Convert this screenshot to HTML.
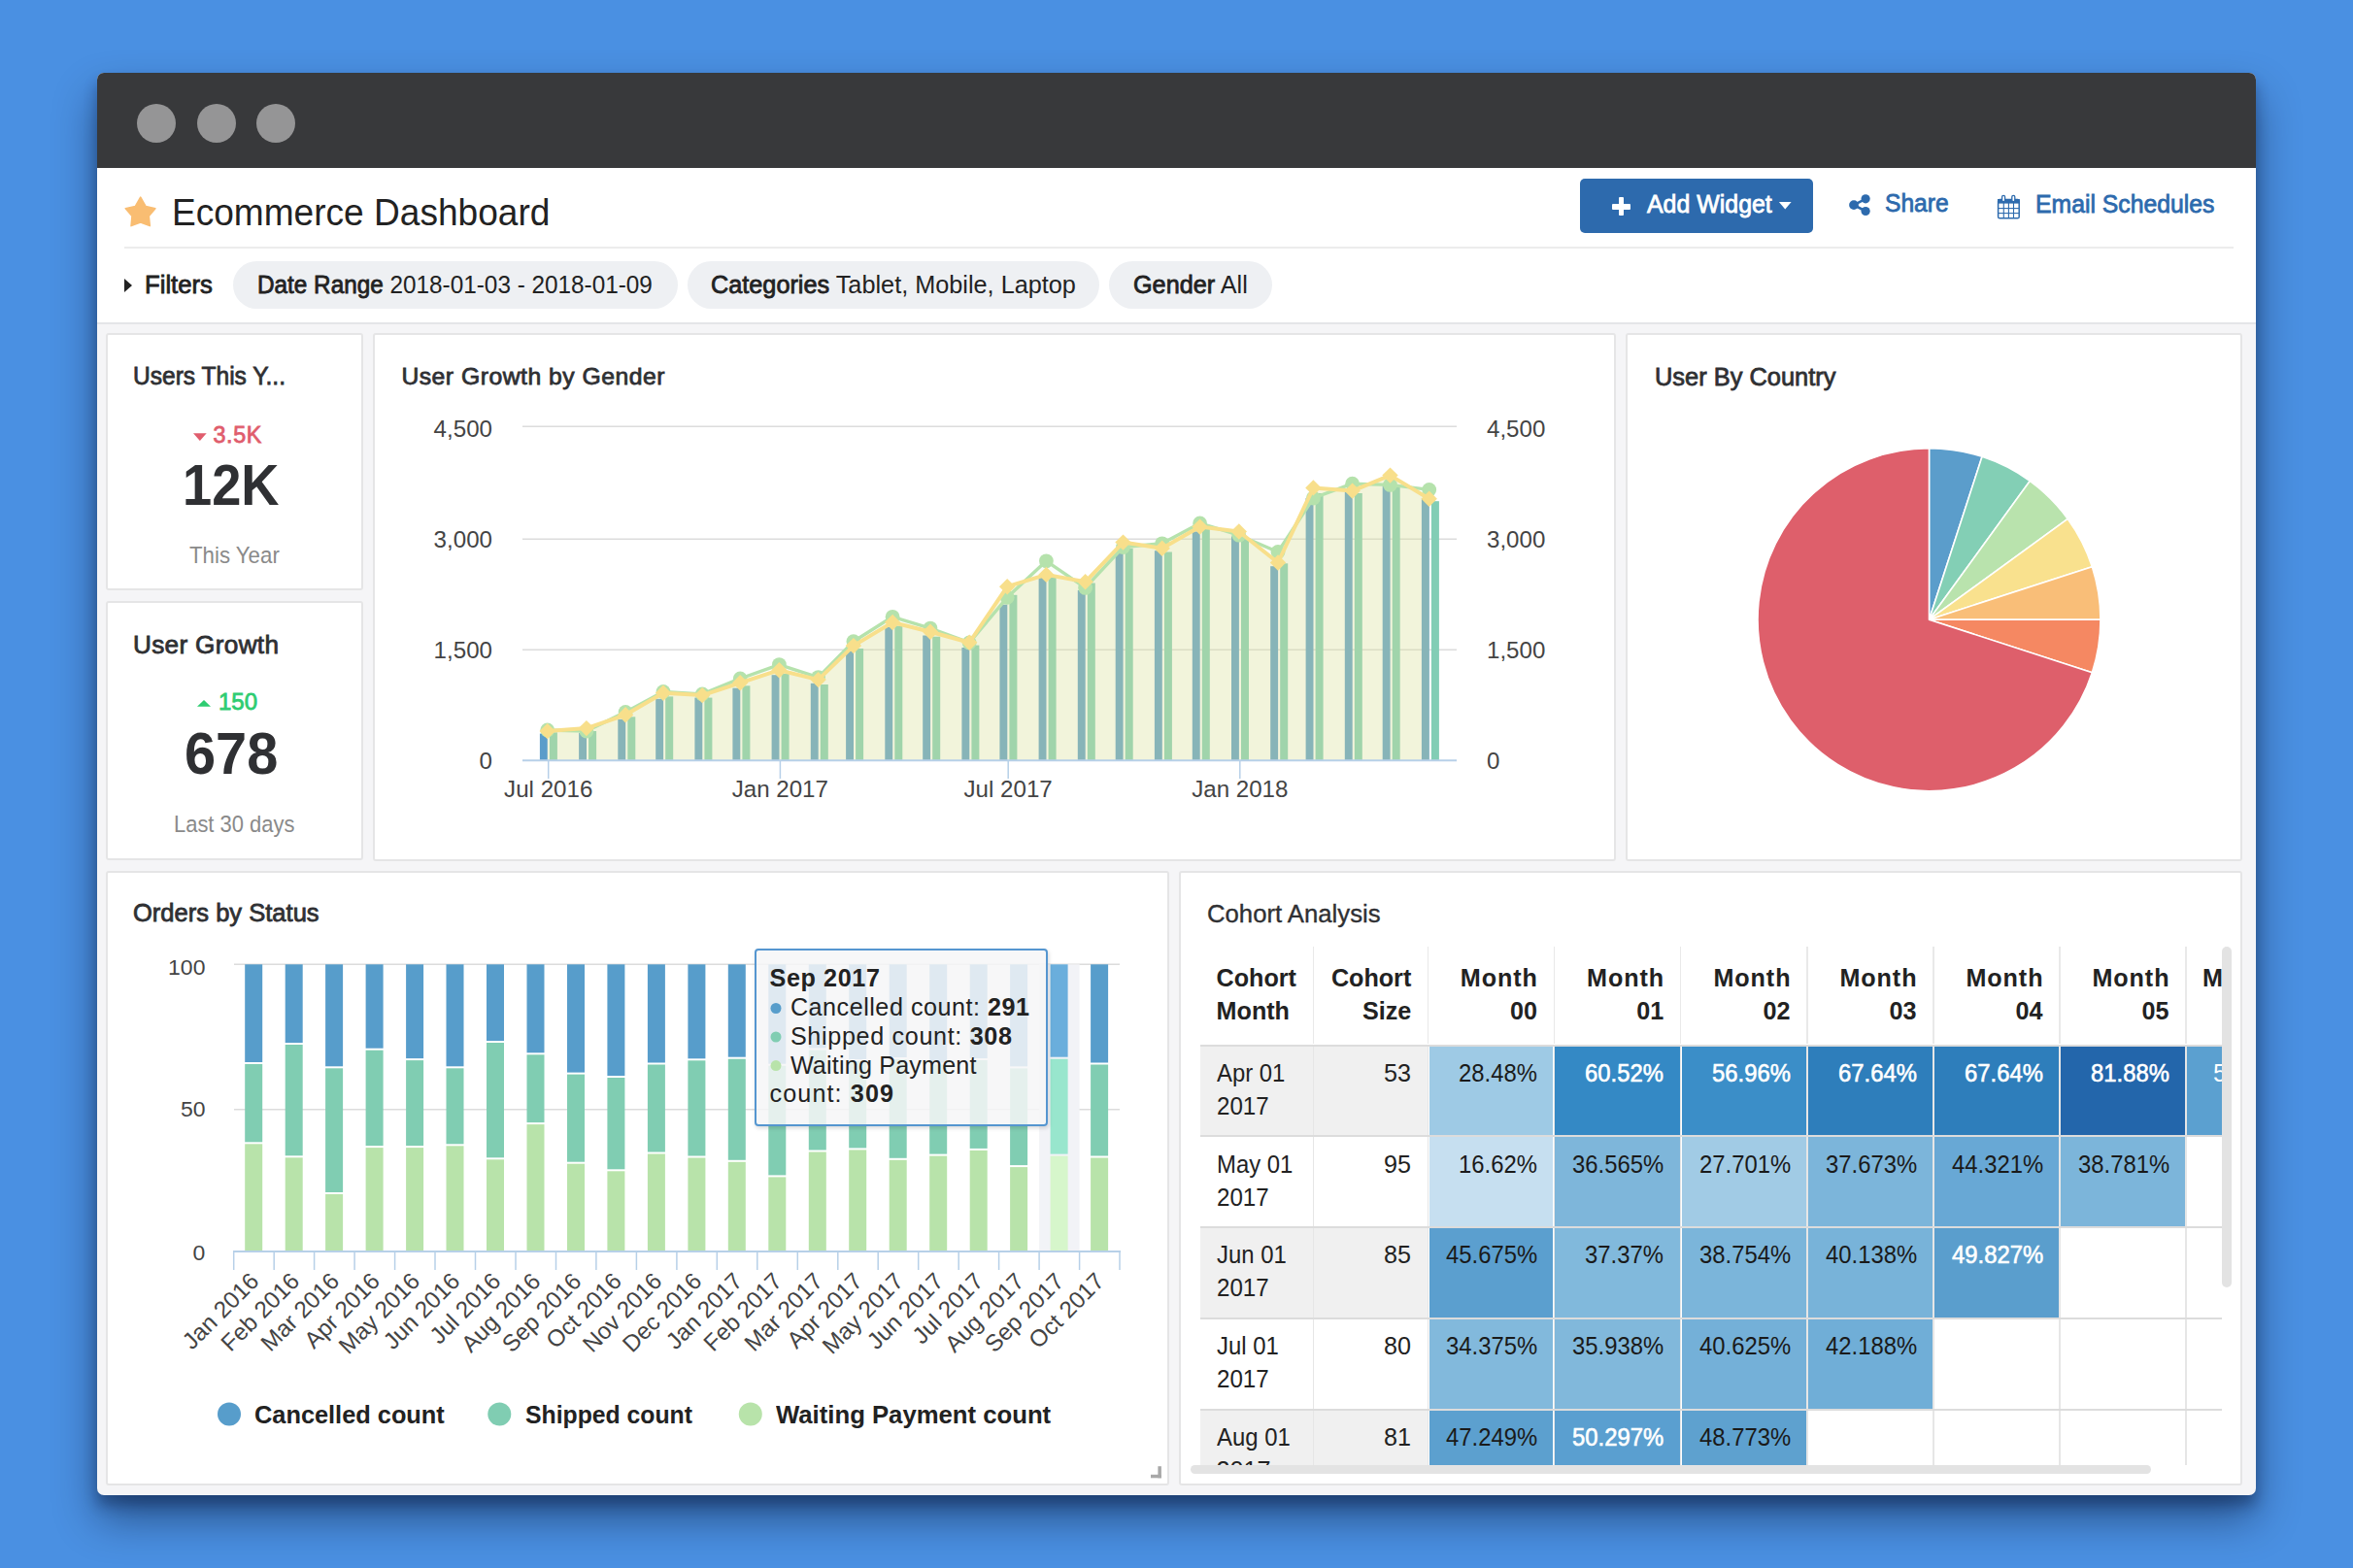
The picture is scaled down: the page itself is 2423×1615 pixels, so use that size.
<!DOCTYPE html><html><head><meta charset="utf-8"><title>Ecommerce Dashboard</title><style>
html,body{margin:0;padding:0;}
body{width:2423px;height:1615px;background:#4a90e2;position:relative;overflow:hidden;font-family:"Liberation Sans",sans-serif;}
.t{position:absolute;white-space:nowrap;}
.t b{font-weight:inherit}
svg{position:absolute;left:0;top:0;}
</style></head><body>
<div style="position:absolute;left:100.0px;top:75.0px;width:2223.0px;height:1465.0px;background:#f5f5f7;border-radius:7px;box-shadow:0 10px 14px rgba(0,10,40,0.30),0 24px 44px rgba(0,10,40,0.46);"></div>
<div style="position:absolute;left:100.0px;top:75.0px;width:2223.0px;height:98.0px;background:#38393b;border-radius:7px 7px 0 0;"></div>
<div style="position:absolute;left:141.3px;top:107.0px;width:40.0px;height:40.0px;background:#959596;border-radius:50%;"></div>
<div style="position:absolute;left:202.6px;top:107.0px;width:40.0px;height:40.0px;background:#959596;border-radius:50%;"></div>
<div style="position:absolute;left:263.9px;top:107.0px;width:40.0px;height:40.0px;background:#959596;border-radius:50%;"></div>
<div style="position:absolute;left:100.0px;top:173.0px;width:2223.0px;height:159.0px;background:#fff;"></div>
<div style="position:absolute;left:100.0px;top:332.0px;width:2223.0px;height:2.0px;background:#e4e5e8;"></div>
<div style="position:absolute;left:128.0px;top:254.0px;width:2172.0px;height:2.0px;background:#ececec;"></div>
<svg width="2423" height="1615" style="pointer-events:none"><polygon points="144.7,203.2 150.1,212.6 159.9,214.7 153.3,222.6 154.3,232.6 144.7,228.9 135.1,232.6 136,222.6 129.3,214.7 139.3,212.6" fill="#f9bd72" stroke="#f9bd72" stroke-width="1.6" stroke-linejoin="round"/></svg>
<span class="t" style="left:176.5px;top:199.8px;font-size:38.95px;line-height:38.95px;color:#222;letter-spacing:0.00px;transform:scaleX(0.9519);transform-origin:0.00px 50%;">Ecommerce Dashboard</span>
<div style="position:absolute;left:1627.3px;top:184.0px;width:239.5px;height:55.5px;background:#2d6aad;border-radius:5px;"></div>
<div style="position:absolute;left:1660.0px;top:209.8px;width:19.0px;height:5.8px;background:#fff;border-radius:1px;"></div>
<div style="position:absolute;left:1666.6px;top:203.2px;width:5.8px;height:18.8px;background:#fff;border-radius:1px;"></div>
<span class="t" style="left:1696.1px;top:197.4px;font-size:26.31px;line-height:26.31px;color:#fff;letter-spacing:0.00px;transform:scaleX(0.9472);transform-origin:0.00px 50%;-webkit-text-stroke:0.8px #fff;">Add Widget</span>
<svg width="2423" height="1615"><polygon points="1831.9,208 1844.6,208 1838.25,215.6" fill="#fff"/><g fill="#2d6aad" stroke="#2d6aad" stroke-width="2.6"><line x1="1909" y1="211.1" x2="1921.1" y2="204.8"/><line x1="1909" y1="211.1" x2="1921.1" y2="217.5"/><circle cx="1921.1" cy="204.8" r="4.6" stroke="none"/><circle cx="1909" cy="211.1" r="4.9" stroke="none"/><circle cx="1921.1" cy="217.5" r="4.6" stroke="none"/></g><g fill="none" stroke="#2d6aad" stroke-width="1.5"><rect x="2057.6" y="205.4" width="21.6" height="19.4" rx="1.6"/></g><rect x="2057" y="205" width="22.8" height="4.6" fill="#2d6aad"/><rect x="2061.6" y="201.3" width="3" height="6.4" rx="1.4" fill="#fff" stroke="#2d6aad" stroke-width="1.3"/><rect x="2071.8" y="201.3" width="3" height="6.4" rx="1.4" fill="#fff" stroke="#2d6aad" stroke-width="1.3"/><g stroke="#2d6aad" stroke-width="1.1"><line x1="2058" y1="214.6" x2="2079" y2="214.6"/><line x1="2058" y1="219.6" x2="2079" y2="219.6"/><line x1="2063.3" y1="209" x2="2063.3" y2="224.5"/><line x1="2068.4" y1="209" x2="2068.4" y2="224.5"/><line x1="2073.5" y1="209" x2="2073.5" y2="224.5"/></g></svg>
<span class="t" style="left:1941.3px;top:196.2px;font-size:26.31px;line-height:26.31px;color:#2d6aad;letter-spacing:0.00px;transform:scaleX(0.9360);transform-origin:0.00px 50%;-webkit-text-stroke:0.8px #2d6aad;">Share</span>
<span class="t" style="left:2095.5px;top:197.4px;font-size:26.31px;line-height:26.31px;color:#2d6aad;letter-spacing:0.00px;transform:scaleX(0.9416);transform-origin:0.00px 50%;-webkit-text-stroke:0.8px #2d6aad;">Email Schedules</span>
<svg width="2423" height="1615"><polygon points="128,287 136,294 128,301" fill="#222"/></svg>
<span class="t" style="left:149.0px;top:280.5px;font-size:25.87px;line-height:25.87px;color:#222;letter-spacing:0.00px;transform:scaleX(0.9940);transform-origin:0.00px 50%;-webkit-text-stroke:0.8px #222;">Filters</span>
<div style="position:absolute;left:240.3px;top:268.5px;width:457.9px;height:49.5px;background:#eef0f3;border-radius:25px;"></div>
<span class="t" style="left:265.0px;top:280.3px;font-size:26.16px;line-height:26.16px;color:#222;letter-spacing:0.00px;transform:scaleX(0.9296);transform-origin:0.00px 50%;"><b style="font-weight:400;-webkit-text-stroke:0.8px #222">Date Range</b><b style="font-weight:400"> 2018-01-03 - 2018-01-09</b></span>
<div style="position:absolute;left:708.0px;top:268.5px;width:423.6px;height:49.5px;background:#eef0f3;border-radius:25px;"></div>
<span class="t" style="left:732.0px;top:280.3px;font-size:26.16px;line-height:26.16px;color:#222;letter-spacing:0.00px;transform:scaleX(0.9658);transform-origin:0.00px 50%;"><b style="font-weight:400;-webkit-text-stroke:0.8px #222">Categories</b><b style="font-weight:400"> Tablet, Mobile, Laptop</b></span>
<div style="position:absolute;left:1142.0px;top:268.5px;width:167.7px;height:49.5px;background:#eef0f3;border-radius:25px;"></div>
<span class="t" style="left:1167.2px;top:280.3px;font-size:26.16px;line-height:26.16px;color:#222;letter-spacing:0.00px;transform:scaleX(0.9643);transform-origin:0.00px 50%;"><b style="font-weight:400;-webkit-text-stroke:0.8px #222">Gender</b><b style="font-weight:400"> All</b></span>
<div style="position:absolute;left:109.4px;top:343.0px;width:264.3px;height:264.5px;background:#fff;border:2px solid #e5e5e6;border-radius:3px;box-sizing:border-box;"></div>
<div style="position:absolute;left:109.4px;top:618.7px;width:264.3px;height:267.8px;background:#fff;border:2px solid #e5e5e6;border-radius:3px;box-sizing:border-box;"></div>
<div style="position:absolute;left:384.0px;top:343.0px;width:1279.7px;height:543.5px;background:#fff;border:2px solid #e5e5e6;border-radius:3px;box-sizing:border-box;"></div>
<div style="position:absolute;left:1674.0px;top:343.0px;width:635.0px;height:543.5px;background:#fff;border:2px solid #e5e5e6;border-radius:3px;box-sizing:border-box;"></div>
<div style="position:absolute;left:109.4px;top:896.7px;width:1094.3px;height:633.6px;background:#fff;border:2px solid #e5e5e6;border-radius:3px;box-sizing:border-box;"></div>
<div style="position:absolute;left:1214.0px;top:896.7px;width:1095.0px;height:633.6px;background:#fff;border:2px solid #e5e5e6;border-radius:3px;box-sizing:border-box;"></div>
<span class="t" style="left:137.0px;top:374.3px;font-size:26.16px;line-height:26.16px;color:#2f3033;letter-spacing:0.00px;transform:scaleX(0.9388);transform-origin:0.00px 50%;-webkit-text-stroke:0.8px #2f3033;">Users This Y...</span>
<svg width="2423" height="1615"><polygon points="199,446.3 212.7,446.3 205.85,454" fill="#e05d6d"/><polygon points="203,727.8 217,727.8 210,721" fill="#2ecc71"/></svg>
<span class="t" style="left:219.4px;top:436.7px;font-size:23.26px;line-height:23.26px;color:#e05d6d;letter-spacing:0.72px;-webkit-text-stroke:0.8px #e05d6d;">3.5K</span>
<span class="t" style="left:187.8px;top:469.5px;font-size:59.59px;line-height:59.59px;font-weight:700;color:#2f3033;letter-spacing:0.00px;transform:scaleX(0.9104);transform-origin:0.00px 50%;">12K</span>
<span class="t" style="left:194.5px;top:560.5px;font-size:23.26px;line-height:23.26px;color:#8a8a8a;letter-spacing:0.00px;transform:scaleX(0.9572);transform-origin:0.00px 50%;">This Year</span>
<span class="t" style="left:137.0px;top:650.5px;font-size:26.16px;line-height:26.16px;color:#2f3033;letter-spacing:0.32px;-webkit-text-stroke:0.8px #2f3033;">User Growth</span>
<span class="t" style="left:225.0px;top:710.9px;font-size:24.42px;line-height:24.42px;color:#2ecc71;letter-spacing:0.00px;transform:scaleX(0.9821);transform-origin:0.00px 50%;-webkit-text-stroke:0.8px #2ecc71;">150</span>
<span class="t" style="left:190.0px;top:746.3px;font-size:61.05px;line-height:61.05px;font-weight:700;color:#2f3033;letter-spacing:0.00px;transform:scaleX(0.9457);transform-origin:0.00px 50%;">678</span>
<span class="t" style="left:179.2px;top:838.2px;font-size:23.69px;line-height:23.69px;color:#8a8a8a;letter-spacing:0.00px;transform:scaleX(0.9261);transform-origin:0.00px 50%;">Last 30 days</span>
<span class="t" style="left:413.4px;top:375.5px;font-size:24.71px;line-height:24.71px;color:#2f3033;letter-spacing:0.51px;-webkit-text-stroke:0.8px #2f3033;">User Growth by Gender</span>
<span class="t" style="left:1703.6px;top:375.1px;font-size:26.16px;line-height:26.16px;color:#2f3033;letter-spacing:0.00px;transform:scaleX(0.9713);transform-origin:0.00px 50%;-webkit-text-stroke:0.8px #2f3033;">User By Country</span>
<span class="t" style="left:137.0px;top:928.2px;font-size:25.87px;line-height:25.87px;color:#2f3033;letter-spacing:0.00px;transform:scaleX(0.9875);transform-origin:0.00px 50%;-webkit-text-stroke:0.8px #2f3033;">Orders by Status</span>
<span class="t" style="left:1243.1px;top:928.9px;font-size:25.73px;line-height:25.73px;color:#2f3033;letter-spacing:0.00px;transform:scaleX(0.9992);transform-origin:0.00px 50%;-webkit-text-stroke:0.35px #2f3033;">Cohort Analysis</span>
<svg width="2423" height="1615"><line x1="538" y1="439.2" x2="1500" y2="439.2" stroke="#dcdcdc" stroke-width="1.6"/><line x1="538" y1="555.2" x2="1500" y2="555.2" stroke="#dcdcdc" stroke-width="1.6"/><line x1="538" y1="669.3" x2="1500" y2="669.3" stroke="#dcdcdc" stroke-width="1.6"/><rect x="555.9" y="755.6" width="7.9" height="27.6" fill="#5b9dca"/><rect x="565.9" y="754.3" width="8" height="28.9" fill="#82cdb5"/><rect x="596.1" y="755.0" width="7.9" height="28.2" fill="#5b9dca"/><rect x="606.1" y="753.0" width="8" height="30.2" fill="#82cdb5"/><rect x="636.3" y="740.8" width="7.9" height="42.4" fill="#5b9dca"/><rect x="646.3" y="738.3" width="8" height="44.9" fill="#82cdb5"/><rect x="675.2" y="719.8" width="7.9" height="63.4" fill="#5b9dca"/><rect x="685.2" y="717.4" width="8" height="65.8" fill="#82cdb5"/><rect x="715.4" y="718.6" width="7.9" height="64.6" fill="#5b9dca"/><rect x="725.4" y="718.6" width="8" height="64.6" fill="#82cdb5"/><rect x="754.4" y="708.7" width="7.9" height="74.5" fill="#5b9dca"/><rect x="764.4" y="706.3" width="8" height="76.9" fill="#82cdb5"/><rect x="794.6" y="695.2" width="7.9" height="88.0" fill="#5b9dca"/><rect x="804.6" y="694.0" width="8" height="89.2" fill="#82cdb5"/><rect x="834.8" y="703.8" width="7.9" height="79.4" fill="#5b9dca"/><rect x="844.8" y="705.0" width="8" height="78.2" fill="#82cdb5"/><rect x="871.1" y="670.5" width="7.9" height="112.7" fill="#5b9dca"/><rect x="881.1" y="668.0" width="8" height="115.2" fill="#82cdb5"/><rect x="911.3" y="645.9" width="7.9" height="137.3" fill="#5b9dca"/><rect x="921.3" y="644.6" width="8" height="138.6" fill="#82cdb5"/><rect x="950.2" y="654.5" width="7.9" height="128.7" fill="#5b9dca"/><rect x="960.2" y="655.7" width="8" height="127.5" fill="#82cdb5"/><rect x="990.4" y="667.0" width="7.9" height="116.2" fill="#5b9dca"/><rect x="1000.4" y="664.6" width="8" height="118.6" fill="#82cdb5"/><rect x="1029.4" y="622.7" width="7.9" height="160.5" fill="#5b9dca"/><rect x="1039.4" y="612.8" width="8" height="170.4" fill="#82cdb5"/><rect x="1069.6" y="594.3" width="7.9" height="188.9" fill="#5b9dca"/><rect x="1079.6" y="595.0" width="8" height="188.2" fill="#82cdb5"/><rect x="1109.8" y="608.0" width="7.9" height="175.2" fill="#5b9dca"/><rect x="1119.8" y="600.5" width="8" height="182.7" fill="#82cdb5"/><rect x="1148.7" y="569.7" width="7.9" height="213.5" fill="#5b9dca"/><rect x="1158.7" y="564.8" width="8" height="218.4" fill="#82cdb5"/><rect x="1188.9" y="567.2" width="7.9" height="216.0" fill="#5b9dca"/><rect x="1198.9" y="568.5" width="8" height="214.7" fill="#82cdb5"/><rect x="1227.8" y="547.5" width="7.9" height="235.7" fill="#5b9dca"/><rect x="1237.8" y="545.0" width="8" height="238.2" fill="#82cdb5"/><rect x="1268.0" y="552.4" width="7.9" height="230.8" fill="#5b9dca"/><rect x="1278.0" y="554.9" width="8" height="228.3" fill="#82cdb5"/><rect x="1308.2" y="583.2" width="7.9" height="200.0" fill="#5b9dca"/><rect x="1318.2" y="580.3" width="8" height="202.9" fill="#82cdb5"/><rect x="1344.6" y="513.0" width="7.9" height="270.2" fill="#5b9dca"/><rect x="1354.6" y="508.0" width="8" height="275.2" fill="#82cdb5"/><rect x="1384.8" y="506.8" width="7.9" height="276.4" fill="#5b9dca"/><rect x="1394.8" y="508.0" width="8" height="275.2" fill="#82cdb5"/><rect x="1423.7" y="499.4" width="7.9" height="283.8" fill="#5b9dca"/><rect x="1433.7" y="501.9" width="8" height="281.3" fill="#82cdb5"/><rect x="1463.9" y="513.0" width="7.9" height="270.2" fill="#5b9dca"/><rect x="1473.9" y="516.2" width="8" height="267.0" fill="#82cdb5"/><polygon points="563.7,783.2 563.7,752.0 603.9,753.0 644.1,733.4 683.0,712.4 723.2,714.9 762.2,698.9 802.4,684.6 842.6,697.6 878.9,660.7 919.1,635.3 958.0,647.1 998.2,661.9 1037.2,615.3 1077.4,577.8 1117.6,605.4 1156.5,563.5 1196.7,559.8 1235.6,538.9 1275.8,551.2 1316.0,568.5 1352.4,513.0 1392.6,498.2 1431.5,499.4 1471.7,504.4 1471.7,783.2" fill="rgb(190,225,180)" fill-opacity="0.07"/><polygon points="563.7,783.2 563.7,753.1 603.9,750.1 644.1,736.3 683.0,713.7 723.2,716.1 762.2,703.3 802.4,690.2 842.6,700.1 878.9,665.1 919.1,641.0 958.0,650.8 998.2,661.8 1037.2,604.2 1077.4,591.9 1117.6,599.3 1156.5,558.6 1196.7,564.8 1235.6,542.6 1275.8,547.5 1316.0,579.5 1352.4,502.4 1392.6,505.6 1431.5,489.6 1471.7,513.7 1471.7,783.2" fill="rgb(225,224,148)" fill-opacity="0.30"/><line x1="538" y1="783.2" x2="1500" y2="783.2" stroke="#b7d0e8" stroke-width="2"/><line x1="564.7" y1="783" x2="564.7" y2="802" stroke="#b7d0e8" stroke-width="1.5"/><line x1="803.4" y1="783" x2="803.4" y2="802" stroke="#b7d0e8" stroke-width="1.5"/><line x1="1038.2" y1="783" x2="1038.2" y2="802" stroke="#b7d0e8" stroke-width="1.5"/><line x1="1276.8" y1="783" x2="1276.8" y2="802" stroke="#b7d0e8" stroke-width="1.5"/><polyline points="563.7,752.0 603.9,753.0 644.1,733.4 683.0,712.4 723.2,714.9 762.2,698.9 802.4,684.6 842.6,697.6 878.9,660.7 919.1,635.3 958.0,647.1 998.2,661.9 1037.2,615.3 1077.4,577.8 1117.6,605.4 1156.5,563.5 1196.7,559.8 1235.6,538.9 1275.8,551.2 1316.0,568.5 1352.4,513.0 1392.6,498.2 1431.5,499.4 1471.7,504.4" fill="none" stroke="#b5e2ac" stroke-width="3.4" stroke-linejoin="round"/><circle cx="563.7" cy="752.0" r="7.4" fill="#b5e2ac"/><circle cx="603.9" cy="753.0" r="7.4" fill="#b5e2ac"/><circle cx="644.1" cy="733.4" r="7.4" fill="#b5e2ac"/><circle cx="683.0" cy="712.4" r="7.4" fill="#b5e2ac"/><circle cx="723.2" cy="714.9" r="7.4" fill="#b5e2ac"/><circle cx="762.2" cy="698.9" r="7.4" fill="#b5e2ac"/><circle cx="802.4" cy="684.6" r="7.4" fill="#b5e2ac"/><circle cx="842.6" cy="697.6" r="7.4" fill="#b5e2ac"/><circle cx="878.9" cy="660.7" r="7.4" fill="#b5e2ac"/><circle cx="919.1" cy="635.3" r="7.4" fill="#b5e2ac"/><circle cx="958.0" cy="647.1" r="7.4" fill="#b5e2ac"/><circle cx="998.2" cy="661.9" r="7.4" fill="#b5e2ac"/><circle cx="1037.2" cy="615.3" r="7.4" fill="#b5e2ac"/><circle cx="1077.4" cy="577.8" r="7.4" fill="#b5e2ac"/><circle cx="1117.6" cy="605.4" r="7.4" fill="#b5e2ac"/><circle cx="1156.5" cy="563.5" r="7.4" fill="#b5e2ac"/><circle cx="1196.7" cy="559.8" r="7.4" fill="#b5e2ac"/><circle cx="1235.6" cy="538.9" r="7.4" fill="#b5e2ac"/><circle cx="1275.8" cy="551.2" r="7.4" fill="#b5e2ac"/><circle cx="1316.0" cy="568.5" r="7.4" fill="#b5e2ac"/><circle cx="1352.4" cy="513.0" r="7.4" fill="#b5e2ac"/><circle cx="1392.6" cy="498.2" r="7.4" fill="#b5e2ac"/><circle cx="1431.5" cy="499.4" r="7.4" fill="#b5e2ac"/><circle cx="1471.7" cy="504.4" r="7.4" fill="#b5e2ac"/><polyline points="563.7,753.1 603.9,750.1 644.1,736.3 683.0,713.7 723.2,716.1 762.2,703.3 802.4,690.2 842.6,700.1 878.9,665.1 919.1,641.0 958.0,650.8 998.2,661.8 1037.2,604.2 1077.4,591.9 1117.6,599.3 1156.5,558.6 1196.7,564.8 1235.6,542.6 1275.8,547.5 1316.0,579.5 1352.4,502.4 1392.6,505.6 1431.5,489.6 1471.7,513.7" fill="none" stroke="#f8df8b" stroke-width="4" stroke-linejoin="round"/><polygon points="563.7,744.9 571.9,753.1 563.7,761.3 555.5,753.1" fill="#f8df8b"/><polygon points="603.9,741.9 612.1,750.1 603.9,758.3 595.7,750.1" fill="#f8df8b"/><polygon points="644.1,728.1 652.3,736.3 644.1,744.5 635.9,736.3" fill="#f8df8b"/><polygon points="683.0,705.5 691.2,713.7 683.0,721.9 674.8,713.7" fill="#f8df8b"/><polygon points="723.2,707.9 731.4,716.1 723.2,724.3 715.0,716.1" fill="#f8df8b"/><polygon points="762.2,695.1 770.4,703.3 762.2,711.5 754.0,703.3" fill="#f8df8b"/><polygon points="802.4,682.0 810.6,690.2 802.4,698.4 794.2,690.2" fill="#f8df8b"/><polygon points="842.6,691.9 850.8,700.1 842.6,708.3 834.4,700.1" fill="#f8df8b"/><polygon points="878.9,656.9 887.1,665.1 878.9,673.3 870.7,665.1" fill="#f8df8b"/><polygon points="919.1,632.8 927.3,641.0 919.1,649.2 910.9,641.0" fill="#f8df8b"/><polygon points="958.0,642.6 966.2,650.8 958.0,659.0 949.8,650.8" fill="#f8df8b"/><polygon points="998.2,653.6 1006.4,661.8 998.2,670.0 990.0,661.8" fill="#f8df8b"/><polygon points="1037.2,596.0 1045.4,604.2 1037.2,612.4 1029.0,604.2" fill="#f8df8b"/><polygon points="1077.4,583.7 1085.6,591.9 1077.4,600.1 1069.2,591.9" fill="#f8df8b"/><polygon points="1117.6,591.1 1125.8,599.3 1117.6,607.5 1109.4,599.3" fill="#f8df8b"/><polygon points="1156.5,550.4 1164.7,558.6 1156.5,566.8 1148.3,558.6" fill="#f8df8b"/><polygon points="1196.7,556.6 1204.9,564.8 1196.7,573.0 1188.5,564.8" fill="#f8df8b"/><polygon points="1235.6,534.4 1243.8,542.6 1235.6,550.8 1227.4,542.6" fill="#f8df8b"/><polygon points="1275.8,539.3 1284.0,547.5 1275.8,555.7 1267.6,547.5" fill="#f8df8b"/><polygon points="1316.0,571.3 1324.2,579.5 1316.0,587.7 1307.8,579.5" fill="#f8df8b"/><polygon points="1352.4,494.2 1360.6,502.4 1352.4,510.6 1344.2,502.4" fill="#f8df8b"/><polygon points="1392.6,497.4 1400.8,505.6 1392.6,513.8 1384.4,505.6" fill="#f8df8b"/><polygon points="1431.5,481.4 1439.7,489.6 1431.5,497.8 1423.3,489.6" fill="#f8df8b"/><polygon points="1471.7,505.5 1479.9,513.7 1471.7,521.9 1463.5,513.7" fill="#f8df8b"/><path d="M1986.5,638.2 L1986.50,461.70 A176.5,176.5 0 0 1 2041.04,470.34 Z" fill="#5b9dcb" stroke="#fff" stroke-width="1.6" stroke-linejoin="round"/><path d="M1986.5,638.2 L2041.04,470.34 A176.5,176.5 0 0 1 2090.24,495.41 Z" fill="#83cfb5" stroke="#fff" stroke-width="1.6" stroke-linejoin="round"/><path d="M1986.5,638.2 L2090.24,495.41 A176.5,176.5 0 0 1 2129.29,534.46 Z" fill="#b9e3ad" stroke="#fff" stroke-width="1.6" stroke-linejoin="round"/><path d="M1986.5,638.2 L2129.29,534.46 A176.5,176.5 0 0 1 2154.36,583.66 Z" fill="#f9e18e" stroke="#fff" stroke-width="1.6" stroke-linejoin="round"/><path d="M1986.5,638.2 L2154.36,583.66 A176.5,176.5 0 0 1 2163.00,638.20 Z" fill="#f9be78" stroke="#fff" stroke-width="1.6" stroke-linejoin="round"/><path d="M1986.5,638.2 L2163.00,638.20 A176.5,176.5 0 0 1 2154.36,692.74 Z" fill="#f58862" stroke="#fff" stroke-width="1.6" stroke-linejoin="round"/><path d="M1986.5,638.2 L2154.36,692.74 A176.5,176.5 0 1 1 1986.50,461.70 Z" fill="#de5f6b" stroke="#fff" stroke-width="1.6" stroke-linejoin="round"/><line x1="241" y1="993.3" x2="1153" y2="993.3" stroke="#dcdcdc" stroke-width="1.6"/><line x1="241" y1="1142.8" x2="1153" y2="1142.8" stroke="#dcdcdc" stroke-width="1.6"/><rect x="1070.1" y="993.3" width="41.5" height="295.70000000000005" fill="#f2f3f7"/><rect x="252.2" y="993.3" width="18" height="100.7" fill="#579dcb"/><rect x="252.2" y="1096.0" width="18" height="80.3" fill="#80cdb2"/><rect x="252.2" y="1178.3" width="18" height="110.7" fill="#b8e3aa"/><rect x="293.7" y="993.3" width="18" height="80.7" fill="#579dcb"/><rect x="293.7" y="1076.0" width="18" height="114.3" fill="#80cdb2"/><rect x="293.7" y="1192.3" width="18" height="96.7" fill="#b8e3aa"/><rect x="335.1" y="993.3" width="18" height="105.0" fill="#579dcb"/><rect x="335.1" y="1100.3" width="18" height="127.7" fill="#80cdb2"/><rect x="335.1" y="1230.0" width="18" height="59.0" fill="#b8e3aa"/><rect x="376.6" y="993.3" width="18" height="86.4" fill="#579dcb"/><rect x="376.6" y="1081.7" width="18" height="98.4" fill="#80cdb2"/><rect x="376.6" y="1182.1" width="18" height="106.9" fill="#b8e3aa"/><rect x="418.1" y="993.3" width="18" height="96.8" fill="#579dcb"/><rect x="418.1" y="1092.1" width="18" height="88.0" fill="#80cdb2"/><rect x="418.1" y="1182.1" width="18" height="106.9" fill="#b8e3aa"/><rect x="459.5" y="993.3" width="18" height="105.0" fill="#579dcb"/><rect x="459.5" y="1100.3" width="18" height="78.0" fill="#80cdb2"/><rect x="459.5" y="1180.3" width="18" height="108.7" fill="#b8e3aa"/><rect x="501.0" y="993.3" width="18" height="78.7" fill="#579dcb"/><rect x="501.0" y="1074.0" width="18" height="118.3" fill="#80cdb2"/><rect x="501.0" y="1194.3" width="18" height="94.7" fill="#b8e3aa"/><rect x="542.5" y="993.3" width="18" height="91.0" fill="#579dcb"/><rect x="542.5" y="1086.3" width="18" height="69.8" fill="#80cdb2"/><rect x="542.5" y="1158.1" width="18" height="130.9" fill="#b8e3aa"/><rect x="584.0" y="993.3" width="18" height="111.3" fill="#579dcb"/><rect x="584.0" y="1106.6" width="18" height="90.1" fill="#80cdb2"/><rect x="584.0" y="1198.7" width="18" height="90.3" fill="#b8e3aa"/><rect x="625.4" y="993.3" width="18" height="114.7" fill="#579dcb"/><rect x="625.4" y="1110.0" width="18" height="94.3" fill="#80cdb2"/><rect x="625.4" y="1206.3" width="18" height="82.7" fill="#b8e3aa"/><rect x="666.9" y="993.3" width="18" height="101.2" fill="#579dcb"/><rect x="666.9" y="1096.5" width="18" height="90.0" fill="#80cdb2"/><rect x="666.9" y="1188.5" width="18" height="100.5" fill="#b8e3aa"/><rect x="708.4" y="993.3" width="18" height="97.0" fill="#579dcb"/><rect x="708.4" y="1092.3" width="18" height="98.2" fill="#80cdb2"/><rect x="708.4" y="1192.5" width="18" height="96.5" fill="#b8e3aa"/><rect x="749.8" y="993.3" width="18" height="95.4" fill="#579dcb"/><rect x="749.8" y="1090.7" width="18" height="104.1" fill="#80cdb2"/><rect x="749.8" y="1196.8" width="18" height="92.2" fill="#b8e3aa"/><rect x="791.3" y="993.3" width="18" height="102.4" fill="#579dcb"/><rect x="791.3" y="1097.7" width="18" height="112.7" fill="#80cdb2"/><rect x="791.3" y="1212.4" width="18" height="76.6" fill="#b8e3aa"/><rect x="832.8" y="993.3" width="18" height="86.2" fill="#579dcb"/><rect x="832.8" y="1081.5" width="18" height="103.0" fill="#80cdb2"/><rect x="832.8" y="1186.5" width="18" height="102.5" fill="#b8e3aa"/><rect x="874.2" y="993.3" width="18" height="97.7" fill="#579dcb"/><rect x="874.2" y="1093.0" width="18" height="89.4" fill="#80cdb2"/><rect x="874.2" y="1184.4" width="18" height="104.6" fill="#b8e3aa"/><rect x="915.7" y="993.3" width="18" height="95.7" fill="#579dcb"/><rect x="915.7" y="1091.0" width="18" height="101.8" fill="#80cdb2"/><rect x="915.7" y="1194.8" width="18" height="94.2" fill="#b8e3aa"/><rect x="957.2" y="993.3" width="18" height="101.2" fill="#579dcb"/><rect x="957.2" y="1096.5" width="18" height="92.1" fill="#80cdb2"/><rect x="957.2" y="1190.6" width="18" height="98.4" fill="#b8e3aa"/><rect x="998.7" y="993.3" width="18" height="96.7" fill="#579dcb"/><rect x="998.7" y="1092.0" width="18" height="90.9" fill="#80cdb2"/><rect x="998.7" y="1184.9" width="18" height="104.1" fill="#b8e3aa"/><rect x="1040.1" y="993.3" width="18" height="105.1" fill="#579dcb"/><rect x="1040.1" y="1100.4" width="18" height="99.7" fill="#80cdb2"/><rect x="1040.1" y="1202.1" width="18" height="86.9" fill="#b8e3aa"/><rect x="1081.6" y="993.3" width="18" height="95.4" fill="#6aaedc"/><rect x="1081.6" y="1090.7" width="18" height="97.9" fill="#98e6cd"/><rect x="1081.6" y="1190.6" width="18" height="98.4" fill="#d6f6cb"/><rect x="1123.1" y="993.3" width="18" height="101.2" fill="#579dcb"/><rect x="1123.1" y="1096.5" width="18" height="94.0" fill="#80cdb2"/><rect x="1123.1" y="1192.5" width="18" height="96.5" fill="#b8e3aa"/><line x1="240" y1="1289" x2="1154" y2="1289" stroke="#b7d0e8" stroke-width="2"/><line x1="240.7" y1="1289" x2="240.7" y2="1308" stroke="#b7d0e8" stroke-width="1.5"/><line x1="282.2" y1="1289" x2="282.2" y2="1308" stroke="#b7d0e8" stroke-width="1.5"/><line x1="323.6" y1="1289" x2="323.6" y2="1308" stroke="#b7d0e8" stroke-width="1.5"/><line x1="365.1" y1="1289" x2="365.1" y2="1308" stroke="#b7d0e8" stroke-width="1.5"/><line x1="406.6" y1="1289" x2="406.6" y2="1308" stroke="#b7d0e8" stroke-width="1.5"/><line x1="448.0" y1="1289" x2="448.0" y2="1308" stroke="#b7d0e8" stroke-width="1.5"/><line x1="489.5" y1="1289" x2="489.5" y2="1308" stroke="#b7d0e8" stroke-width="1.5"/><line x1="531.0" y1="1289" x2="531.0" y2="1308" stroke="#b7d0e8" stroke-width="1.5"/><line x1="572.5" y1="1289" x2="572.5" y2="1308" stroke="#b7d0e8" stroke-width="1.5"/><line x1="613.9" y1="1289" x2="613.9" y2="1308" stroke="#b7d0e8" stroke-width="1.5"/><line x1="655.4" y1="1289" x2="655.4" y2="1308" stroke="#b7d0e8" stroke-width="1.5"/><line x1="696.9" y1="1289" x2="696.9" y2="1308" stroke="#b7d0e8" stroke-width="1.5"/><line x1="738.3" y1="1289" x2="738.3" y2="1308" stroke="#b7d0e8" stroke-width="1.5"/><line x1="779.8" y1="1289" x2="779.8" y2="1308" stroke="#b7d0e8" stroke-width="1.5"/><line x1="821.3" y1="1289" x2="821.3" y2="1308" stroke="#b7d0e8" stroke-width="1.5"/><line x1="862.8" y1="1289" x2="862.8" y2="1308" stroke="#b7d0e8" stroke-width="1.5"/><line x1="904.2" y1="1289" x2="904.2" y2="1308" stroke="#b7d0e8" stroke-width="1.5"/><line x1="945.7" y1="1289" x2="945.7" y2="1308" stroke="#b7d0e8" stroke-width="1.5"/><line x1="987.2" y1="1289" x2="987.2" y2="1308" stroke="#b7d0e8" stroke-width="1.5"/><line x1="1028.6" y1="1289" x2="1028.6" y2="1308" stroke="#b7d0e8" stroke-width="1.5"/><line x1="1070.1" y1="1289" x2="1070.1" y2="1308" stroke="#b7d0e8" stroke-width="1.5"/><line x1="1111.6" y1="1289" x2="1111.6" y2="1308" stroke="#b7d0e8" stroke-width="1.5"/><line x1="1153.0" y1="1289" x2="1153.0" y2="1308" stroke="#b7d0e8" stroke-width="1.5"/></svg>
<span class="t" style="left:446.6px;top:430.3px;font-size:24.13px;line-height:24.13px;color:#444;letter-spacing:0.00px;">4,500</span>
<span class="t" style="left:1531.0px;top:430.3px;font-size:24.13px;line-height:24.13px;color:#444;letter-spacing:0.00px;">4,500</span>
<span class="t" style="left:446.6px;top:544.0px;font-size:24.13px;line-height:24.13px;color:#444;letter-spacing:0.00px;">3,000</span>
<span class="t" style="left:1531.0px;top:544.0px;font-size:24.13px;line-height:24.13px;color:#444;letter-spacing:0.00px;">3,000</span>
<span class="t" style="left:446.6px;top:658.1px;font-size:24.13px;line-height:24.13px;color:#444;letter-spacing:0.00px;">1,500</span>
<span class="t" style="left:1531.0px;top:658.1px;font-size:24.13px;line-height:24.13px;color:#444;letter-spacing:0.00px;">1,500</span>
<span class="t" style="left:493.6px;top:772.0px;font-size:24.13px;line-height:24.13px;color:#444;letter-spacing:0.00px;">0</span>
<span class="t" style="left:1531.0px;top:772.0px;font-size:24.13px;line-height:24.13px;color:#444;letter-spacing:0.00px;">0</span>
<span class="t" style="left:519.1px;top:800.6px;font-size:24.13px;line-height:24.13px;color:#444;letter-spacing:0.00px;">Jul 2016</span>
<span class="t" style="left:753.7px;top:800.6px;font-size:24.13px;line-height:24.13px;color:#444;letter-spacing:0.00px;">Jan 2017</span>
<span class="t" style="left:992.5px;top:800.6px;font-size:24.13px;line-height:24.13px;color:#444;letter-spacing:0.00px;">Jul 2017</span>
<span class="t" style="left:1227.2px;top:800.6px;font-size:24.13px;line-height:24.13px;color:#444;letter-spacing:0.00px;">Jan 2018</span>
<span class="t" style="left:173.1px;top:984.7px;font-size:22.97px;line-height:22.97px;color:#444;letter-spacing:0.00px;">100</span>
<span class="t" style="left:185.9px;top:1130.8px;font-size:22.97px;line-height:22.97px;color:#444;letter-spacing:0.00px;">50</span>
<span class="t" style="left:198.6px;top:1278.9px;font-size:22.97px;line-height:22.97px;color:#444;letter-spacing:0.00px;">0</span>
<span class="t" style="left:168.9px;top:1300.6px;font-size:24.13px;line-height:24.13px;color:#444;transform-origin:100% 84.7%;transform:rotate(-45deg);">Jan 2016</span>
<span class="t" style="left:207.7px;top:1300.6px;font-size:24.13px;line-height:24.13px;color:#444;transform-origin:100% 84.7%;transform:rotate(-45deg);">Feb 2016</span>
<span class="t" style="left:249.2px;top:1300.6px;font-size:24.13px;line-height:24.13px;color:#444;transform-origin:100% 84.7%;transform:rotate(-45deg);">Mar 2016</span>
<span class="t" style="left:294.7px;top:1300.6px;font-size:24.13px;line-height:24.13px;color:#444;transform-origin:100% 84.7%;transform:rotate(-45deg);">Apr 2016</span>
<span class="t" style="left:328.1px;top:1300.6px;font-size:24.13px;line-height:24.13px;color:#444;transform-origin:100% 84.7%;transform:rotate(-45deg);">May 2016</span>
<span class="t" style="left:376.3px;top:1300.6px;font-size:24.13px;line-height:24.13px;color:#444;transform-origin:100% 84.7%;transform:rotate(-45deg);">Jun 2016</span>
<span class="t" style="left:425.8px;top:1300.6px;font-size:24.13px;line-height:24.13px;color:#444;transform-origin:100% 84.7%;transform:rotate(-45deg);">Jul 2016</span>
<span class="t" style="left:455.2px;top:1300.6px;font-size:24.13px;line-height:24.13px;color:#444;transform-origin:100% 84.7%;transform:rotate(-45deg);">Aug 2016</span>
<span class="t" style="left:496.6px;top:1300.6px;font-size:24.13px;line-height:24.13px;color:#444;transform-origin:100% 84.7%;transform:rotate(-45deg);">Sep 2016</span>
<span class="t" style="left:543.5px;top:1300.6px;font-size:24.13px;line-height:24.13px;color:#444;transform-origin:100% 84.7%;transform:rotate(-45deg);">Oct 2016</span>
<span class="t" style="left:579.6px;top:1300.6px;font-size:24.13px;line-height:24.13px;color:#444;transform-origin:100% 84.7%;transform:rotate(-45deg);">Nov 2016</span>
<span class="t" style="left:621.1px;top:1300.6px;font-size:24.13px;line-height:24.13px;color:#444;transform-origin:100% 84.7%;transform:rotate(-45deg);">Dec 2016</span>
<span class="t" style="left:666.6px;top:1300.6px;font-size:24.13px;line-height:24.13px;color:#444;transform-origin:100% 84.7%;transform:rotate(-45deg);">Jan 2017</span>
<span class="t" style="left:705.3px;top:1300.6px;font-size:24.13px;line-height:24.13px;color:#444;transform-origin:100% 84.7%;transform:rotate(-45deg);">Feb 2017</span>
<span class="t" style="left:746.8px;top:1300.6px;font-size:24.13px;line-height:24.13px;color:#444;transform-origin:100% 84.7%;transform:rotate(-45deg);">Mar 2017</span>
<span class="t" style="left:792.3px;top:1300.6px;font-size:24.13px;line-height:24.13px;color:#444;transform-origin:100% 84.7%;transform:rotate(-45deg);">Apr 2017</span>
<span class="t" style="left:825.8px;top:1300.6px;font-size:24.13px;line-height:24.13px;color:#444;transform-origin:100% 84.7%;transform:rotate(-45deg);">May 2017</span>
<span class="t" style="left:873.9px;top:1300.6px;font-size:24.13px;line-height:24.13px;color:#444;transform-origin:100% 84.7%;transform:rotate(-45deg);">Jun 2017</span>
<span class="t" style="left:923.4px;top:1300.6px;font-size:24.13px;line-height:24.13px;color:#444;transform-origin:100% 84.7%;transform:rotate(-45deg);">Jul 2017</span>
<span class="t" style="left:952.8px;top:1300.6px;font-size:24.13px;line-height:24.13px;color:#444;transform-origin:100% 84.7%;transform:rotate(-45deg);">Aug 2017</span>
<span class="t" style="left:994.3px;top:1300.6px;font-size:24.13px;line-height:24.13px;color:#444;transform-origin:100% 84.7%;transform:rotate(-45deg);">Sep 2017</span>
<span class="t" style="left:1041.2px;top:1300.6px;font-size:24.13px;line-height:24.13px;color:#444;transform-origin:100% 84.7%;transform:rotate(-45deg);">Oct 2017</span>
<svg width="2423" height="1615"><circle cx="236" cy="1456.5" r="12" fill="#579dcb"/><circle cx="514.3" cy="1456.5" r="12" fill="#80cdb2"/><circle cx="772.8" cy="1456.5" r="12" fill="#b8e3aa"/><rect x="1192.4" y="1510.2" width="3.5" height="12.1" fill="#a8a8a8"/><rect x="1185" y="1518.8" width="10.9" height="3.5" fill="#a8a8a8"/></svg>
<span class="t" style="left:262.4px;top:1444.2px;font-size:26.02px;line-height:26.02px;font-weight:700;color:#222;letter-spacing:0.00px;transform:scaleX(0.9743);transform-origin:0.00px 50%;">Cancelled count</span>
<span class="t" style="left:541.1px;top:1444.2px;font-size:26.02px;line-height:26.02px;font-weight:700;color:#222;letter-spacing:0.00px;transform:scaleX(0.9520);transform-origin:0.00px 50%;">Shipped count</span>
<span class="t" style="left:799.0px;top:1444.2px;font-size:26.02px;line-height:26.02px;font-weight:700;color:#222;letter-spacing:0.00px;transform:scaleX(0.9878);transform-origin:0.00px 50%;">Waiting Payment count</span>
<div style="position:absolute;left:776.9px;top:976.8px;width:302.6px;height:183.0px;background:rgba(246,246,247,0.86);border:2px solid #5596d0;border-radius:4px;box-sizing:border-box;box-shadow:1px 2px 4px rgba(0,0,0,0.15);"></div>
<span class="t" style="left:792.5px;top:995.0px;font-size:25.15px;line-height:25.15px;font-weight:700;color:#222;letter-spacing:0.62px;">Sep 2017</span>
<svg width="2423" height="1615"><circle cx="799" cy="1038.5" r="5.5" fill="#579dcb"/><circle cx="799" cy="1068" r="5.5" fill="#80cdb2"/><circle cx="799" cy="1097.6" r="5.5" fill="#b8e3aa"/></svg>
<span class="t" style="left:813.9px;top:1025.3px;font-size:25.15px;line-height:25.15px;color:#222;letter-spacing:0.52px;"><b style="font-weight:400">Cancelled count: </b><b style="font-weight:700">291</b></span>
<span class="t" style="left:813.9px;top:1054.7px;font-size:25.15px;line-height:25.15px;color:#222;letter-spacing:0.67px;"><b style="font-weight:400">Shipped count: </b><b style="font-weight:700">308</b></span>
<span class="t" style="left:813.9px;top:1084.5px;font-size:25.15px;line-height:25.15px;color:#222;letter-spacing:0.18px;">Waiting Payment</span>
<span class="t" style="left:792.5px;top:1114.4px;font-size:25.15px;line-height:25.15px;color:#222;letter-spacing:1.12px;"><b style="font-weight:400">count: </b><b style="font-weight:700">309</b></span>
<div style="position:absolute;left:1226px;top:960px;width:1062px;height:548.5px;overflow:hidden;"><div style="position:absolute;left:125.9px;top:15.0px;width:1.2px;height:100.0px;background:#e9e9e9;"></div><div style="position:absolute;left:244.1px;top:15.0px;width:1.2px;height:100.0px;background:#e9e9e9;"></div><div style="position:absolute;left:373.8px;top:15.0px;width:1.2px;height:100.0px;background:#e9e9e9;"></div><div style="position:absolute;left:504.0px;top:15.0px;width:1.2px;height:100.0px;background:#e9e9e9;"></div><div style="position:absolute;left:634.4px;top:15.0px;width:1.2px;height:100.0px;background:#e9e9e9;"></div><div style="position:absolute;left:764.4px;top:15.0px;width:1.2px;height:100.0px;background:#e9e9e9;"></div><div style="position:absolute;left:894.4px;top:15.0px;width:1.2px;height:100.0px;background:#e9e9e9;"></div><div style="position:absolute;left:1024.4px;top:15.0px;width:1.2px;height:100.0px;background:#e9e9e9;"></div><div style="position:absolute;left:10.0px;top:116.5px;width:234.7px;height:93.5px;background:#f0f0f0;"></div><div style="position:absolute;left:125.9px;top:116.5px;width:1.2px;height:93.5px;background:#e6e6e6;"></div><div style="position:absolute;left:244.1px;top:116.5px;width:1.2px;height:93.5px;background:#e6e6e6;"></div><div style="position:absolute;left:373.8px;top:116.5px;width:1.2px;height:93.5px;background:#e6e6e6;"></div><div style="position:absolute;left:504.0px;top:116.5px;width:1.2px;height:93.5px;background:#e6e6e6;"></div><div style="position:absolute;left:634.4px;top:116.5px;width:1.2px;height:93.5px;background:#e6e6e6;"></div><div style="position:absolute;left:764.4px;top:116.5px;width:1.2px;height:93.5px;background:#e6e6e6;"></div><div style="position:absolute;left:894.4px;top:116.5px;width:1.2px;height:93.5px;background:#e6e6e6;"></div><div style="position:absolute;left:1024.4px;top:116.5px;width:1.2px;height:93.5px;background:#e6e6e6;"></div><div style="position:absolute;left:125.9px;top:210.0px;width:1.2px;height:93.5px;background:#e6e6e6;"></div><div style="position:absolute;left:244.1px;top:210.0px;width:1.2px;height:93.5px;background:#e6e6e6;"></div><div style="position:absolute;left:373.8px;top:210.0px;width:1.2px;height:93.5px;background:#e6e6e6;"></div><div style="position:absolute;left:504.0px;top:210.0px;width:1.2px;height:93.5px;background:#e6e6e6;"></div><div style="position:absolute;left:634.4px;top:210.0px;width:1.2px;height:93.5px;background:#e6e6e6;"></div><div style="position:absolute;left:764.4px;top:210.0px;width:1.2px;height:93.5px;background:#e6e6e6;"></div><div style="position:absolute;left:894.4px;top:210.0px;width:1.2px;height:93.5px;background:#e6e6e6;"></div><div style="position:absolute;left:1024.4px;top:210.0px;width:1.2px;height:93.5px;background:#e6e6e6;"></div><div style="position:absolute;left:10.0px;top:303.5px;width:234.7px;height:94.0px;background:#f0f0f0;"></div><div style="position:absolute;left:125.9px;top:303.5px;width:1.2px;height:94.0px;background:#e6e6e6;"></div><div style="position:absolute;left:244.1px;top:303.5px;width:1.2px;height:94.0px;background:#e6e6e6;"></div><div style="position:absolute;left:373.8px;top:303.5px;width:1.2px;height:94.0px;background:#e6e6e6;"></div><div style="position:absolute;left:504.0px;top:303.5px;width:1.2px;height:94.0px;background:#e6e6e6;"></div><div style="position:absolute;left:634.4px;top:303.5px;width:1.2px;height:94.0px;background:#e6e6e6;"></div><div style="position:absolute;left:764.4px;top:303.5px;width:1.2px;height:94.0px;background:#e6e6e6;"></div><div style="position:absolute;left:894.4px;top:303.5px;width:1.2px;height:94.0px;background:#e6e6e6;"></div><div style="position:absolute;left:1024.4px;top:303.5px;width:1.2px;height:94.0px;background:#e6e6e6;"></div><div style="position:absolute;left:125.9px;top:397.5px;width:1.2px;height:94.0px;background:#e6e6e6;"></div><div style="position:absolute;left:244.1px;top:397.5px;width:1.2px;height:94.0px;background:#e6e6e6;"></div><div style="position:absolute;left:373.8px;top:397.5px;width:1.2px;height:94.0px;background:#e6e6e6;"></div><div style="position:absolute;left:504.0px;top:397.5px;width:1.2px;height:94.0px;background:#e6e6e6;"></div><div style="position:absolute;left:634.4px;top:397.5px;width:1.2px;height:94.0px;background:#e6e6e6;"></div><div style="position:absolute;left:764.4px;top:397.5px;width:1.2px;height:94.0px;background:#e6e6e6;"></div><div style="position:absolute;left:894.4px;top:397.5px;width:1.2px;height:94.0px;background:#e6e6e6;"></div><div style="position:absolute;left:1024.4px;top:397.5px;width:1.2px;height:94.0px;background:#e6e6e6;"></div><div style="position:absolute;left:10.0px;top:491.5px;width:234.7px;height:93.5px;background:#f0f0f0;"></div><div style="position:absolute;left:125.9px;top:491.5px;width:1.2px;height:93.5px;background:#e6e6e6;"></div><div style="position:absolute;left:244.1px;top:491.5px;width:1.2px;height:93.5px;background:#e6e6e6;"></div><div style="position:absolute;left:373.8px;top:491.5px;width:1.2px;height:93.5px;background:#e6e6e6;"></div><div style="position:absolute;left:504.0px;top:491.5px;width:1.2px;height:93.5px;background:#e6e6e6;"></div><div style="position:absolute;left:634.4px;top:491.5px;width:1.2px;height:93.5px;background:#e6e6e6;"></div><div style="position:absolute;left:764.4px;top:491.5px;width:1.2px;height:93.5px;background:#e6e6e6;"></div><div style="position:absolute;left:894.4px;top:491.5px;width:1.2px;height:93.5px;background:#e6e6e6;"></div><div style="position:absolute;left:1024.4px;top:491.5px;width:1.2px;height:93.5px;background:#e6e6e6;"></div><div style="position:absolute;left:245.7px;top:117.5px;width:127.7px;height:91.5px;background:#9ecae5;"></div><div style="position:absolute;left:375.4px;top:117.5px;width:128.2px;height:91.5px;background:#3489c5;"></div><div style="position:absolute;left:505.6px;top:117.5px;width:128.4px;height:91.5px;background:#3b8ec8;"></div><div style="position:absolute;left:636.0px;top:117.5px;width:128.0px;height:91.5px;background:#2e7ebb;"></div><div style="position:absolute;left:766.0px;top:117.5px;width:128.0px;height:91.5px;background:#2e7ebb;"></div><div style="position:absolute;left:896.0px;top:117.5px;width:128.0px;height:91.5px;background:#2366ab;"></div><div style="position:absolute;left:1026.0px;top:117.5px;width:128.0px;height:91.5px;background:#5ba0d0;"></div><div style="position:absolute;left:245.7px;top:211.0px;width:127.7px;height:91.5px;background:#c6dff0;"></div><div style="position:absolute;left:375.4px;top:211.0px;width:128.2px;height:91.5px;background:#7eb6da;"></div><div style="position:absolute;left:505.6px;top:211.0px;width:128.4px;height:91.5px;background:#a1cbe5;"></div><div style="position:absolute;left:636.0px;top:211.0px;width:128.0px;height:91.5px;background:#7cb5da;"></div><div style="position:absolute;left:766.0px;top:211.0px;width:128.0px;height:91.5px;background:#68a8d5;"></div><div style="position:absolute;left:896.0px;top:211.0px;width:128.0px;height:91.5px;background:#7cb5da;"></div><div style="position:absolute;left:245.7px;top:304.5px;width:127.7px;height:92.0px;background:#5b9fcf;"></div><div style="position:absolute;left:375.4px;top:304.5px;width:128.2px;height:92.0px;background:#81b9dc;"></div><div style="position:absolute;left:505.6px;top:304.5px;width:128.4px;height:92.0px;background:#7bb5da;"></div><div style="position:absolute;left:636.0px;top:304.5px;width:128.0px;height:92.0px;background:#78b3d9;"></div><div style="position:absolute;left:766.0px;top:304.5px;width:128.0px;height:92.0px;background:#5a9ecd;"></div><div style="position:absolute;left:245.7px;top:398.5px;width:127.7px;height:92.0px;background:#82b9dc;"></div><div style="position:absolute;left:375.4px;top:398.5px;width:128.2px;height:92.0px;background:#81b8db;"></div><div style="position:absolute;left:505.6px;top:398.5px;width:128.4px;height:92.0px;background:#74b0d8;"></div><div style="position:absolute;left:636.0px;top:398.5px;width:128.0px;height:92.0px;background:#70aed7;"></div><div style="position:absolute;left:245.7px;top:492.5px;width:127.7px;height:91.5px;background:#5ca0cf;"></div><div style="position:absolute;left:375.4px;top:492.5px;width:128.2px;height:91.5px;background:#5a9fd0;"></div><div style="position:absolute;left:505.6px;top:492.5px;width:128.4px;height:91.5px;background:#5ea1cf;"></div><div style="position:absolute;left:10.0px;top:115.5px;width:1145.0px;height:2.0px;background:#dcdcdc;"></div><div style="position:absolute;left:10.0px;top:209.0px;width:1145.0px;height:2.0px;background:#dcdcdc;"></div><div style="position:absolute;left:10.0px;top:302.5px;width:1145.0px;height:2.0px;background:#dcdcdc;"></div><div style="position:absolute;left:10.0px;top:396.5px;width:1145.0px;height:2.0px;background:#dcdcdc;"></div><div style="position:absolute;left:10.0px;top:490.5px;width:1145.0px;height:2.0px;background:#dcdcdc;"></div><div style="position:absolute;left:10.0px;top:584.0px;width:1145.0px;height:2.0px;background:#dcdcdc;"></div></div>
<span class="t" style="left:1252.6px;top:995.3px;font-size:25.15px;line-height:25.15px;font-weight:700;color:#222;letter-spacing:0.00px;">Cohort</span>
<span class="t" style="left:1252.6px;top:1028.9px;font-size:25.15px;line-height:25.15px;font-weight:700;color:#222;letter-spacing:0.00px;">Month</span>
<span class="t" style="left:1370.9px;top:995.3px;font-size:25.15px;line-height:25.15px;font-weight:700;color:#222;letter-spacing:0.00px;">Cohort</span>
<span class="t" style="left:1403.0px;top:1028.9px;font-size:25.15px;line-height:25.15px;font-weight:700;color:#222;letter-spacing:0.00px;">Size</span>
<span class="t" style="left:1503.8px;top:995.3px;font-size:25.15px;line-height:25.15px;font-weight:700;color:#222;letter-spacing:0.94px;">Month</span>
<span class="t" style="left:1555.0px;top:1028.9px;font-size:25.15px;line-height:25.15px;font-weight:700;color:#222;letter-spacing:0.00px;">00</span>
<span class="t" style="left:1634.0px;top:995.3px;font-size:25.15px;line-height:25.15px;font-weight:700;color:#222;letter-spacing:0.94px;">Month</span>
<span class="t" style="left:1685.2px;top:1028.9px;font-size:25.15px;line-height:25.15px;font-weight:700;color:#222;letter-spacing:0.00px;">01</span>
<span class="t" style="left:1764.4px;top:995.3px;font-size:25.15px;line-height:25.15px;font-weight:700;color:#222;letter-spacing:0.94px;">Month</span>
<span class="t" style="left:1815.6px;top:1028.9px;font-size:25.15px;line-height:25.15px;font-weight:700;color:#222;letter-spacing:0.00px;">02</span>
<span class="t" style="left:1894.4px;top:995.3px;font-size:25.15px;line-height:25.15px;font-weight:700;color:#222;letter-spacing:0.94px;">Month</span>
<span class="t" style="left:1945.6px;top:1028.9px;font-size:25.15px;line-height:25.15px;font-weight:700;color:#222;letter-spacing:0.00px;">03</span>
<span class="t" style="left:2024.4px;top:995.3px;font-size:25.15px;line-height:25.15px;font-weight:700;color:#222;letter-spacing:0.94px;">Month</span>
<span class="t" style="left:2075.6px;top:1028.9px;font-size:25.15px;line-height:25.15px;font-weight:700;color:#222;letter-spacing:0.00px;">04</span>
<span class="t" style="left:2154.4px;top:995.3px;font-size:25.15px;line-height:25.15px;font-weight:700;color:#222;letter-spacing:0.94px;">Month</span>
<span class="t" style="left:2205.6px;top:1028.9px;font-size:25.15px;line-height:25.15px;font-weight:700;color:#222;letter-spacing:0.00px;">05</span>
<div style="position:absolute;left:2250px;top:990px;width:38px;height:40px;overflow:hidden;"><span class="t" style="left:18px;top:5.3px;font-size:25.15px;line-height:25.15px;font-weight:700;color:#222;">M</span></div>
<span class="t" style="left:1252.6px;top:1093.2px;font-size:25.15px;line-height:25.15px;color:#222;letter-spacing:0.00px;transform:scaleX(0.9500);transform-origin:0.00px 50%;">Apr 01</span>
<span class="t" style="left:1252.6px;top:1127.2px;font-size:25.15px;line-height:25.15px;color:#222;letter-spacing:0.00px;transform:scaleX(0.9600);transform-origin:0.00px 50%;">2017</span>
<span class="t" style="left:1425.1px;top:1093.2px;font-size:25.15px;line-height:25.15px;color:#222;letter-spacing:0.00px;">53</span>
<span class="t" style="left:1502.1px;top:1093.2px;font-size:25.15px;line-height:25.15px;color:#1a1a1a;letter-spacing:0.00px;transform:scaleX(0.9480);transform-origin:0.00px 50%;">28.48%</span>
<span class="t" style="left:1632.3px;top:1093.2px;font-size:25.15px;line-height:25.15px;color:#fff;letter-spacing:0.00px;transform:scaleX(0.9480);transform-origin:0.00px 50%;-webkit-text-stroke:0.6px #fff;">60.52%</span>
<span class="t" style="left:1762.7px;top:1093.2px;font-size:25.15px;line-height:25.15px;color:#fff;letter-spacing:0.00px;transform:scaleX(0.9480);transform-origin:0.00px 50%;-webkit-text-stroke:0.6px #fff;">56.96%</span>
<span class="t" style="left:1892.7px;top:1093.2px;font-size:25.15px;line-height:25.15px;color:#fff;letter-spacing:0.00px;transform:scaleX(0.9480);transform-origin:0.00px 50%;-webkit-text-stroke:0.6px #fff;">67.64%</span>
<span class="t" style="left:2022.7px;top:1093.2px;font-size:25.15px;line-height:25.15px;color:#fff;letter-spacing:0.00px;transform:scaleX(0.9480);transform-origin:0.00px 50%;-webkit-text-stroke:0.6px #fff;">67.64%</span>
<span class="t" style="left:2152.7px;top:1093.2px;font-size:25.15px;line-height:25.15px;color:#fff;letter-spacing:0.00px;transform:scaleX(0.9480);transform-origin:0.00px 50%;-webkit-text-stroke:0.6px #fff;">81.88%</span>
<div style="position:absolute;left:2250px;top:1084.5px;width:38px;height:40px;overflow:hidden;"><span class="t" style="left:29px;top:8.7px;font-size:25.15px;line-height:25.15px;color:#fff;">5</span></div>
<span class="t" style="left:1252.6px;top:1186.7px;font-size:25.15px;line-height:25.15px;color:#222;letter-spacing:0.00px;transform:scaleX(0.9500);transform-origin:0.00px 50%;">May 01</span>
<span class="t" style="left:1252.6px;top:1220.7px;font-size:25.15px;line-height:25.15px;color:#222;letter-spacing:0.00px;transform:scaleX(0.9600);transform-origin:0.00px 50%;">2017</span>
<span class="t" style="left:1425.1px;top:1186.7px;font-size:25.15px;line-height:25.15px;color:#222;letter-spacing:0.00px;">95</span>
<span class="t" style="left:1502.1px;top:1186.7px;font-size:25.15px;line-height:25.15px;color:#1a1a1a;letter-spacing:0.00px;transform:scaleX(0.9480);transform-origin:0.00px 50%;">16.62%</span>
<span class="t" style="left:1619.1px;top:1186.7px;font-size:25.15px;line-height:25.15px;color:#1a1a1a;letter-spacing:0.00px;transform:scaleX(0.9480);transform-origin:0.00px 50%;">36.565%</span>
<span class="t" style="left:1749.5px;top:1186.7px;font-size:25.15px;line-height:25.15px;color:#1a1a1a;letter-spacing:0.00px;transform:scaleX(0.9480);transform-origin:0.00px 50%;">27.701%</span>
<span class="t" style="left:1879.5px;top:1186.7px;font-size:25.15px;line-height:25.15px;color:#1a1a1a;letter-spacing:0.00px;transform:scaleX(0.9480);transform-origin:0.00px 50%;">37.673%</span>
<span class="t" style="left:2009.5px;top:1186.7px;font-size:25.15px;line-height:25.15px;color:#1a1a1a;letter-spacing:0.00px;transform:scaleX(0.9480);transform-origin:0.00px 50%;">44.321%</span>
<span class="t" style="left:2139.5px;top:1186.7px;font-size:25.15px;line-height:25.15px;color:#1a1a1a;letter-spacing:0.00px;transform:scaleX(0.9480);transform-origin:0.00px 50%;">38.781%</span>
<span class="t" style="left:1252.6px;top:1280.2px;font-size:25.15px;line-height:25.15px;color:#222;letter-spacing:0.00px;transform:scaleX(0.9500);transform-origin:0.00px 50%;">Jun 01</span>
<span class="t" style="left:1252.6px;top:1314.2px;font-size:25.15px;line-height:25.15px;color:#222;letter-spacing:0.00px;transform:scaleX(0.9600);transform-origin:0.00px 50%;">2017</span>
<span class="t" style="left:1425.1px;top:1280.2px;font-size:25.15px;line-height:25.15px;color:#222;letter-spacing:0.00px;">85</span>
<span class="t" style="left:1488.9px;top:1280.2px;font-size:25.15px;line-height:25.15px;color:#1a1a1a;letter-spacing:0.00px;transform:scaleX(0.9480);transform-origin:0.00px 50%;">45.675%</span>
<span class="t" style="left:1632.3px;top:1280.2px;font-size:25.15px;line-height:25.15px;color:#1a1a1a;letter-spacing:0.00px;transform:scaleX(0.9480);transform-origin:0.00px 50%;">37.37%</span>
<span class="t" style="left:1749.5px;top:1280.2px;font-size:25.15px;line-height:25.15px;color:#1a1a1a;letter-spacing:0.00px;transform:scaleX(0.9480);transform-origin:0.00px 50%;">38.754%</span>
<span class="t" style="left:1879.5px;top:1280.2px;font-size:25.15px;line-height:25.15px;color:#1a1a1a;letter-spacing:0.00px;transform:scaleX(0.9480);transform-origin:0.00px 50%;">40.138%</span>
<span class="t" style="left:2009.5px;top:1280.2px;font-size:25.15px;line-height:25.15px;color:#fff;letter-spacing:0.00px;transform:scaleX(0.9480);transform-origin:0.00px 50%;-webkit-text-stroke:0.6px #fff;">49.827%</span>
<span class="t" style="left:1252.6px;top:1374.2px;font-size:25.15px;line-height:25.15px;color:#222;letter-spacing:0.00px;transform:scaleX(0.9500);transform-origin:0.00px 50%;">Jul 01</span>
<span class="t" style="left:1252.6px;top:1408.2px;font-size:25.15px;line-height:25.15px;color:#222;letter-spacing:0.00px;transform:scaleX(0.9600);transform-origin:0.00px 50%;">2017</span>
<span class="t" style="left:1425.1px;top:1374.2px;font-size:25.15px;line-height:25.15px;color:#222;letter-spacing:0.00px;">80</span>
<span class="t" style="left:1488.9px;top:1374.2px;font-size:25.15px;line-height:25.15px;color:#1a1a1a;letter-spacing:0.00px;transform:scaleX(0.9480);transform-origin:0.00px 50%;">34.375%</span>
<span class="t" style="left:1619.1px;top:1374.2px;font-size:25.15px;line-height:25.15px;color:#1a1a1a;letter-spacing:0.00px;transform:scaleX(0.9480);transform-origin:0.00px 50%;">35.938%</span>
<span class="t" style="left:1749.5px;top:1374.2px;font-size:25.15px;line-height:25.15px;color:#1a1a1a;letter-spacing:0.00px;transform:scaleX(0.9480);transform-origin:0.00px 50%;">40.625%</span>
<span class="t" style="left:1879.5px;top:1374.2px;font-size:25.15px;line-height:25.15px;color:#1a1a1a;letter-spacing:0.00px;transform:scaleX(0.9480);transform-origin:0.00px 50%;">42.188%</span>
<span class="t" style="left:1252.6px;top:1468.2px;font-size:25.15px;line-height:25.15px;color:#222;letter-spacing:0.00px;transform:scaleX(0.9500);transform-origin:0.00px 50%;">Aug 01</span>
<span class="t" style="left:1425.1px;top:1468.2px;font-size:25.15px;line-height:25.15px;color:#222;letter-spacing:0.00px;">81</span>
<span class="t" style="left:1488.9px;top:1468.2px;font-size:25.15px;line-height:25.15px;color:#1a1a1a;letter-spacing:0.00px;transform:scaleX(0.9480);transform-origin:0.00px 50%;">47.249%</span>
<span class="t" style="left:1619.1px;top:1468.2px;font-size:25.15px;line-height:25.15px;color:#fff;letter-spacing:0.00px;transform:scaleX(0.9480);transform-origin:0.00px 50%;-webkit-text-stroke:0.6px #fff;">50.297%</span>
<span class="t" style="left:1749.5px;top:1468.2px;font-size:25.15px;line-height:25.15px;color:#1a1a1a;letter-spacing:0.00px;transform:scaleX(0.9480);transform-origin:0.00px 50%;">48.773%</span>
<div style="position:absolute;left:1240px;top:1494px;width:80px;height:14.5px;overflow:hidden;"><span class="t" style="left:12.6px;top:8.2px;font-size:25.15px;line-height:25.15px;color:#222;">2017</span></div>
<div style="position:absolute;left:1226.0px;top:1508.7px;width:989.2px;height:9.3px;background:#e3e3e3;border-radius:5px;"></div>
<div style="position:absolute;left:2288.0px;top:974.8px;width:10.2px;height:351.2px;background:#e3e3e3;border-radius:5px;"></div>
</body></html>
